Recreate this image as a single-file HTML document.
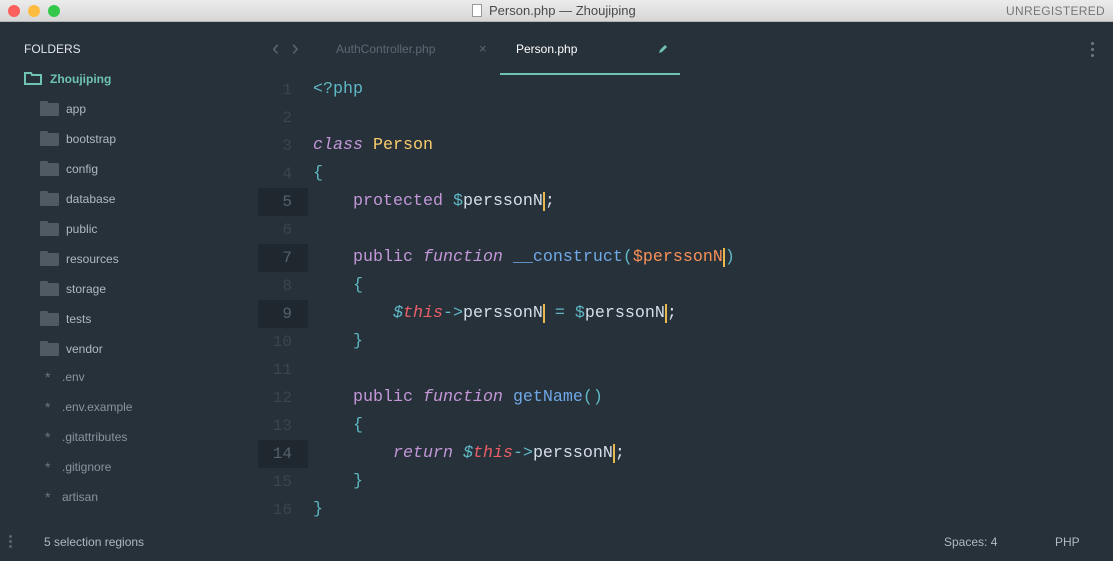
<!DOCTYPE html>
<html><head><meta charset="utf-8"><style>
*{margin:0;padding:0;box-sizing:border-box}
body{width:1113px;height:561px;overflow:hidden;background:#27313a;font-family:"Liberation Sans",sans-serif;position:relative}
.title{position:absolute;left:0;top:0;width:1113px;height:22px;background:linear-gradient(#ececec,#d6d6d6);border-bottom:1px solid #b5b5b5}
.dot{position:absolute;top:5px;width:12px;height:12px;border-radius:50%}
.title .t{position:absolute;left:489px;top:3px;font-size:13px;color:#4a4a4a}
.title .u{position:absolute;right:8px;top:4px;font-size:12px;color:#777;letter-spacing:.3px}
.sb{position:absolute;left:0;top:22px;width:258px;height:507px;background:#27313a}
.sb .h{position:absolute;left:24px;top:20px;font-size:12px;color:#e0e4e8}
.it{position:absolute;left:66px;font-size:12px;color:#b0b8c0}
.fd{position:absolute;left:40px;width:19px;height:13px;background:#4f5a63;border-radius:1px}
.fd:before{content:"";position:absolute;left:0;top:-2px;width:8px;height:3px;background:#4f5a63;border-radius:1px 1px 0 0}
.st{position:absolute;left:45px;font-size:14px;color:#6d7780}
.ln{position:absolute;left:258px;width:50px;height:28px;line-height:28px;text-align:right;padding-right:16px;color:#3a454e;font-family:"Liberation Mono",monospace;font-size:16px}
.ln.hl{background:#1f282e;color:#56616b}
.l{position:absolute;left:313px;height:28px;line-height:28px;white-space:pre;color:#d8dee9;font-family:"Liberation Mono",monospace;font-size:16.67px}
.k{color:#c397d8}.i{font-style:italic}.y{color:#f9cc6c}.c{color:#5fb8c5}.b{color:#6fa8e6}.o{color:#f99157}.r{color:#ec5f67}.w{color:#d8dee9}
.cur{border-right:2px solid #e8b94f}
.status{position:absolute;left:0;top:529px;width:1113px;height:32px;background:#27313a;font-size:12px;color:#b0b8c0}
</style></head><body>
<div class="title">
<div class="dot" style="left:8px;background:#fc605c"></div>
<div class="dot" style="left:28px;background:#fdbc40"></div>
<div class="dot" style="left:48px;background:#34c84a"></div>
<div style="position:absolute;left:472px;top:4px;width:10px;height:13px;background:#fff;border:1px solid #999"></div>
<div class="t">Person.php — Zhoujiping</div>
<div class="u">UNREGISTERED</div>
</div>
<div class="sb">
<div class="h">FOLDERS</div>
<svg style="position:absolute;left:24px;top:50px" width="18" height="13"><path d="M1 1h6l1 2h9v9H1z" fill="none" stroke="#6fc3b2" stroke-width="2"/></svg>
<div style="position:absolute;left:50px;top:50px;font-size:12px;font-weight:bold;color:#6fc3b2">Zhoujiping</div>
<div class="fd" style="top:81px"></div><div class="it" style="top:80px">app</div>
<div class="fd" style="top:111px"></div><div class="it" style="top:110px">bootstrap</div>
<div class="fd" style="top:141px"></div><div class="it" style="top:140px">config</div>
<div class="fd" style="top:171px"></div><div class="it" style="top:170px">database</div>
<div class="fd" style="top:201px"></div><div class="it" style="top:200px">public</div>
<div class="fd" style="top:231px"></div><div class="it" style="top:230px">resources</div>
<div class="fd" style="top:261px"></div><div class="it" style="top:260px">storage</div>
<div class="fd" style="top:291px"></div><div class="it" style="top:290px">tests</div>
<div class="fd" style="top:321px"></div><div class="it" style="top:320px">vendor</div>
<div class="st" style="top:347px">*</div><div class="it" style="top:348px;left:62px;color:#8a949d">.env</div>
<div class="st" style="top:377px">*</div><div class="it" style="top:378px;left:62px;color:#8a949d">.env.example</div>
<div class="st" style="top:407px">*</div><div class="it" style="top:408px;left:62px;color:#8a949d">.gitattributes</div>
<div class="st" style="top:437px">*</div><div class="it" style="top:438px;left:62px;color:#8a949d">.gitignore</div>
<div class="st" style="top:467px">*</div><div class="it" style="top:468px;left:62px;color:#8a949d">artisan</div>
</div>
<div style="position:absolute;left:272px;top:35px;font-size:22px;color:#59646d">&#8249;&nbsp;&nbsp;&#8250;</div>
<div style="position:absolute;left:336px;top:42px;font-size:12px;color:#5d6872">AuthController.php</div>
<div style="position:absolute;left:479px;top:41px;font-size:13px;color:#5d6872">×</div>
<div style="position:absolute;left:516px;top:42px;font-size:12px;color:#fff">Person.php</div>
<svg style="position:absolute;left:658px;top:44px" width="10" height="10"><path d="M1 9l1-3 5-5 2 2-5 5z" fill="#6fc3b2"/></svg>
<div style="position:absolute;left:500px;top:73px;width:180px;height:2px;background:#6fc3b2"></div>
<div style="position:absolute;left:1091px;top:42px;width:3px;height:3px;border-radius:50%;background:#6d7780;box-shadow:0 6px #6d7780,0 12px #6d7780"></div>

<div class="ln" style="top:76px">1</div><div class="l" style="top:76px"><span class="c">&lt;?php</span></div>
<div class="ln" style="top:104px">2</div>
<div class="ln" style="top:132px">3</div><div class="l" style="top:132px"><span class="k i">class</span> <span class="y">Person</span></div>
<div class="ln" style="top:160px">4</div><div class="l" style="top:160px"><span class="c">{</span></div>
<div class="ln hl" style="top:188px">5</div><div class="l" style="top:188px">    <span class="k">protected</span> <span class="c">$</span><span class="cur">perssonN</span><span class="w">;</span></div>
<div class="ln" style="top:216px">6</div>
<div class="ln hl" style="top:244px">7</div><div class="l" style="top:244px">    <span class="k">public</span> <span class="k i">function</span> <span class="b">__construct</span><span class="c">(</span><span class="o">$</span><span class="o cur">perssonN</span><span class="c">)</span></div>
<div class="ln" style="top:272px">8</div><div class="l" style="top:272px">    <span class="c">{</span></div>
<div class="ln hl" style="top:300px">9</div><div class="l" style="top:300px">        <span class="r i"><span class="c">$</span>this</span><span class="c">-&gt;</span><span class="cur">perssonN</span> <span class="c">=</span> <span class="c">$</span><span class="cur">perssonN</span><span class="w">;</span></div>
<div class="ln" style="top:328px">10</div><div class="l" style="top:328px">    <span class="c">}</span></div>
<div class="ln" style="top:356px">11</div>
<div class="ln" style="top:384px">12</div><div class="l" style="top:384px">    <span class="k">public</span> <span class="k i">function</span> <span class="b">getName</span><span class="c">()</span></div>
<div class="ln" style="top:412px">13</div><div class="l" style="top:412px">    <span class="c">{</span></div>
<div class="ln hl" style="top:440px">14</div><div class="l" style="top:440px">        <span class="k i">return</span> <span class="r i"><span class="c">$</span>this</span><span class="c">-&gt;</span><span class="cur">perssonN</span><span class="w">;</span></div>
<div class="ln" style="top:468px">15</div><div class="l" style="top:468px">    <span class="c">}</span></div>
<div class="ln" style="top:496px">16</div><div class="l" style="top:496px"><span class="c">}</span></div>

<div class="status">
<div style="position:absolute;left:9px;top:6px;width:3px;height:3px;border-radius:50%;background:#59646d;box-shadow:0 5px #59646d,0 10px #59646d"></div>
<div style="position:absolute;left:44px;top:6px">5 selection regions</div>
<div style="position:absolute;left:944px;top:6px">Spaces: 4</div>
<div style="position:absolute;left:1055px;top:6px">PHP</div>
</div>
</body></html>
